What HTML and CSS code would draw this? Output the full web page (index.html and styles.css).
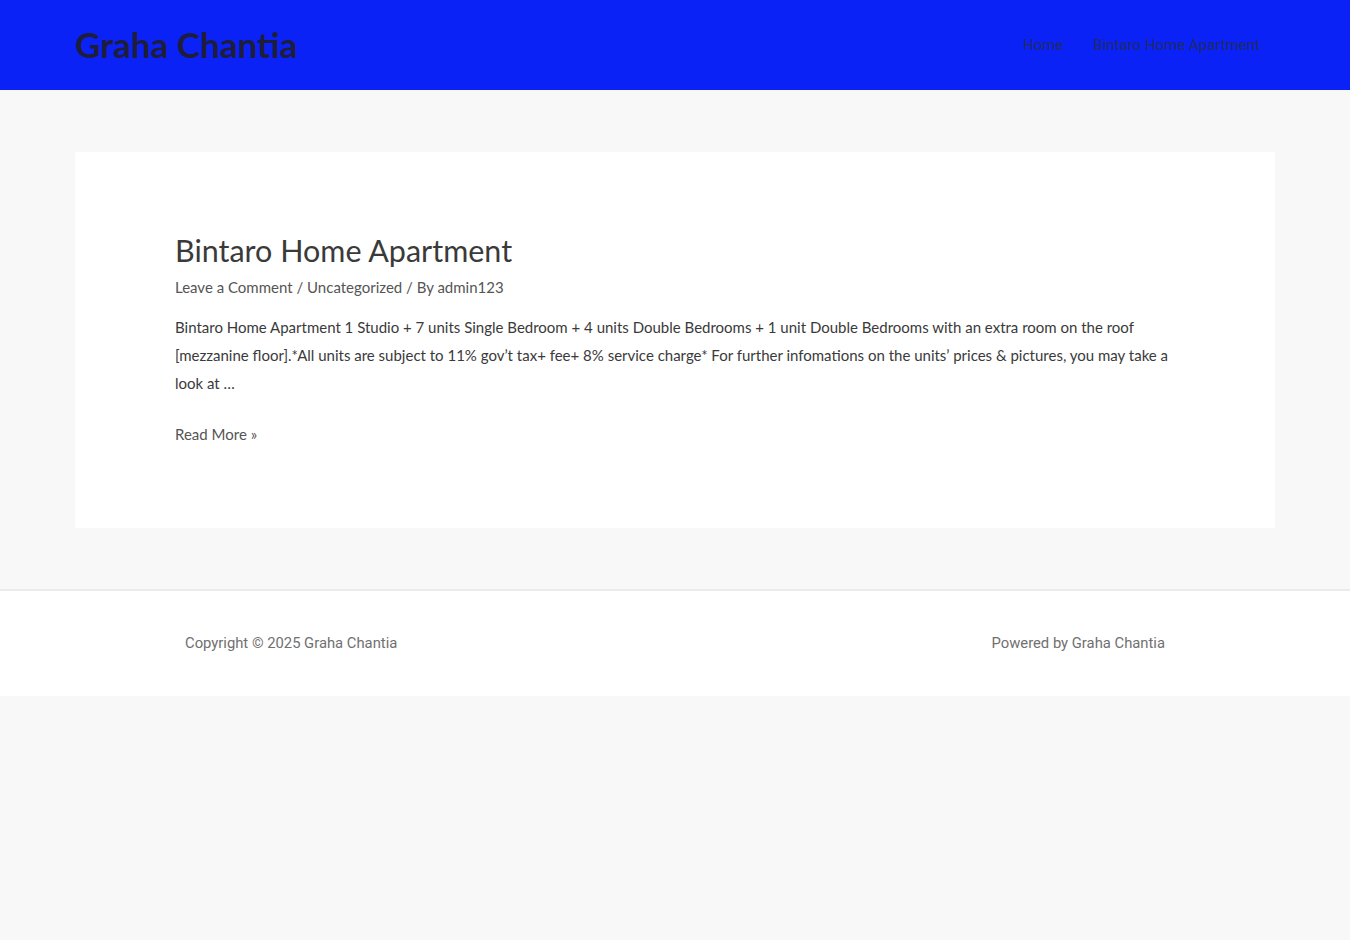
FILE: index.html
```html
<!DOCTYPE html>
<html lang="en">
<head>
    <meta charset="UTF-8">
    <meta name="viewport" content="width=device-width, initial-scale=1.0">
    <title>Graha Chantia</title>
    <link rel="stylesheet" href="styles.css">
</head>
<body>
    <header class="site-header">
        <div class="container header-inner">
            <a class="site-title" href="#">Graha Chantia</a>
            <nav class="main-nav">
                <a href="#">Home</a>
                <a href="#">Bintaro Home Apartment</a>
            </nav>
        </div>
    </header>

    <main class="site-content">
        <div class="container">
            <article class="post">
                <h2 class="post-title">Bintaro Home Apartment</h2>
                <div class="post-meta">
                    <a href="#">Leave a Comment</a> / <a href="#">Uncategorized</a> / By <a href="#">admin123</a>
                </div>
                <p class="post-excerpt">Bintaro Home Apartment 1 Studio + 7 units Single Bedroom + 4 units Double Bedrooms + 1 unit Double Bedrooms with an extra room on the roof [mezzanine floor].*All units are subject to 11% gov’t tax+ fee+ 8% service charge* For further infomations on the units’ prices &amp; pictures, you may take a look at …</p>
                <p class="read-more"><a href="#">Read More »</a></p>
            </article>
        </div>
    </main>

    <footer class="site-footer">
        <div class="footer-inner">
            <span>Copyright © 2025 Graha Chantia</span>
            <span>Powered by Graha Chantia</span>
        </div>
    </footer>
</body>
</html>
```

FILE: styles.css
```css
body {
    margin: 0;
    font-family: Lato, "Open Sans", sans-serif;
    background-color: #f8f8f8;
    color: #3a3a3a;
}
a {
    color: inherit;
    text-decoration: none;
}
.container {
    max-width: 1200px;
    margin: 0 auto;
}
.site-header {
    background-color: #0a22f5;
    height: 90px;
}
.header-inner {
    display: flex;
    align-items: center;
    justify-content: space-between;
    height: 90px;
}
.site-title {
    font-size: 35px;
    font-weight: 700;
    color: #1e1e3c;
    margin-top: -2px;
}
.main-nav {
    display: flex;
}
.main-nav a {
    font-family: Roboto, sans-serif;
    font-size: 15px;
    color: #1f2a6a;
    padding: 0 15px;
}
.site-content {
    padding: 62px 0 61px;
}
.post {
    background-color: #fff;
    padding: 80px 100px 85px;
}
.post-title {
    font-size: 30.5px;
    font-weight: 400;
    margin: 0;
    line-height: 1.2;
    color: #3a3a3a;
}
.post-meta {
    font-size: 15px;
    color: #555;
    margin-top: 9px;
}
.post-meta a {
    color: #555;
}
.post-excerpt {
    font-size: 15px;
    line-height: 28px;
    margin: 17px 0 0;
    color: #3a3a3a;
}
.read-more {
    font-size: 15px;
    margin: 28px 0 0;
    color: #555;
}
.site-footer {
    background-color: #fff;
    border-top: 2px solid #ebebeb;
}
.footer-inner {
    max-width: 980px;
    margin: 0 auto;
    height: 105px;
    display: flex;
    align-items: center;
    justify-content: space-between;
    font-family: Roboto, sans-serif;
    font-size: 14.8px;
    color: #707070;
}
```
